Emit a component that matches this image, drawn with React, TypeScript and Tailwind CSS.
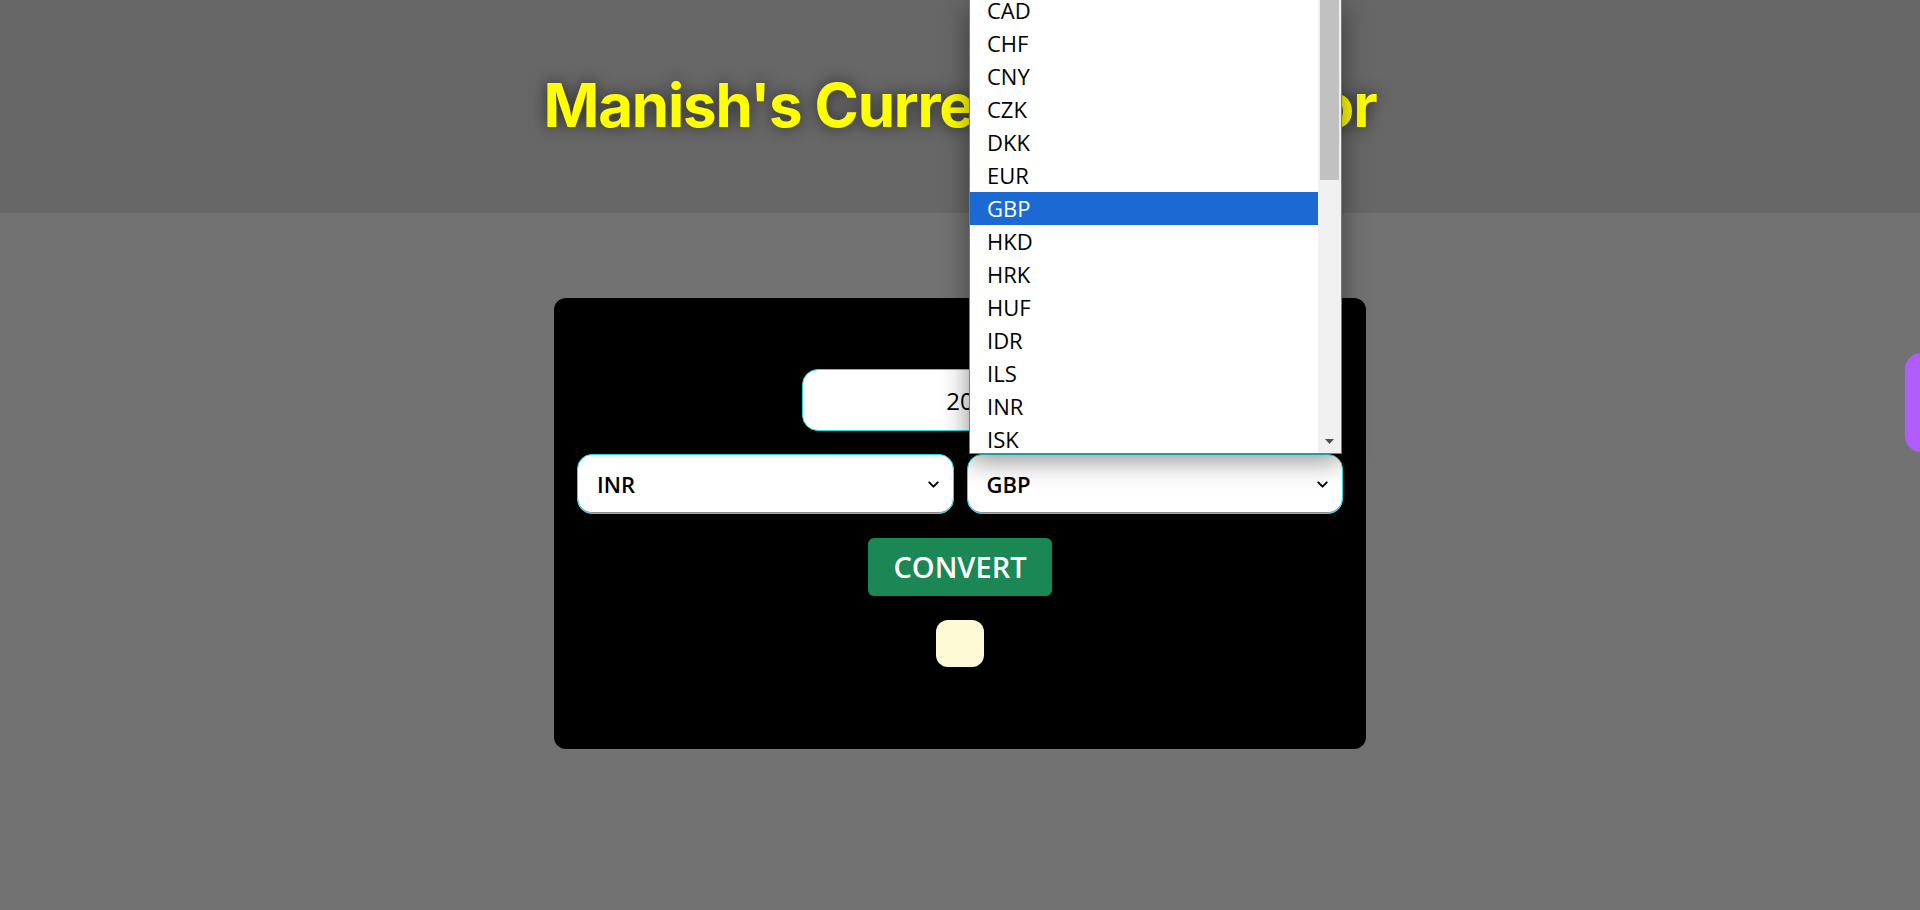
import { ChevronDown } from 'lucide-react'

const currencies = ['CAD', 'CHF', 'CNY', 'CZK', 'DKK', 'EUR', 'GBP', 'HKD', 'HRK', 'HUF', 'IDR', 'ILS', 'INR', 'ISK']

function FakeSelect({ value }: { value: string }) {
  return (
    <div className="flex h-[60px] items-center justify-between rounded-[15px] border border-[#1fe0e0] bg-white pl-[19px] pr-[11px] shadow-[inset_0_-1px_0_#8a8a8a]">
      <span className="text-[22px] font-semibold text-black">{value}</span>
      <ChevronDown className="h-[17px] w-[17px] text-black" strokeWidth={2.75} />
    </div>
  )
}

function OpenList() {
  return (
    <div className="absolute left-[969px] top-0 flex h-[454px] w-[373px] overflow-hidden border border-t-0 border-[#7a7a7a] bg-white shadow-[0_6px_26px_rgba(0,0,0,0.45)]">
      <ul className="-mt-[6px] flex-1">
        {currencies.map((c) => (
          <li
            key={c}
            className={
              c === 'GBP'
                ? 'h-[33px] bg-[#1b69d3] pl-[17px] text-[22px] leading-[33px] text-white'
                : 'h-[33px] pl-[17px] text-[22px] leading-[33px] text-black'
            }
          >
            {c}
          </li>
        ))}
      </ul>
      <div className="flex w-[23px] flex-col justify-between bg-[#f0f0f0] px-[2px] pb-[7px]">
        <div className="h-[180px] bg-[#c1c1c1]" />
        <svg width="19" height="8" viewBox="0 0 19 8" className="self-center">
          <path d="M5 1h9l-4.5 5z" fill="#505050" />
        </svg>
      </div>
    </div>
  )
}

export default function App() {
  return (
    <div className="relative min-h-screen overflow-hidden bg-[#727272] font-['Open_Sans',sans-serif]">
      <header className="flex h-[213px] items-center justify-center bg-[#676767] pb-[4px]">
        <h1 className="font-['Inter',sans-serif] text-[60px] font-bold leading-none tracking-[-1.2px] text-[#ffff00] [text-shadow:0_0_16px_rgba(0,0,0,0.6)]">
          Manish's Currency Convertor
        </h1>
      </header>

      <main className="pt-[85px]">
        <div className="mx-auto flex w-[812px] flex-col items-center rounded-[12px] bg-black px-[23px] pb-[82px] pt-[71px]">
          <input
            readOnly
            value="20"
            className="h-[62px] w-[316px] rounded-[16px] border border-[#1fe0e0] bg-white text-center text-[24px] font-medium text-black outline-none"
          />
          <div className="mt-[23px] grid w-full grid-cols-2 gap-[13px]">
            <FakeSelect value="INR" />
            <FakeSelect value="GBP" />
          </div>
          <button className="mt-[24px] h-[58px] w-[184px] rounded-[6px] bg-[#1a8754] text-[29px] font-semibold text-white">
            CONVERT
          </button>
          <div className="mt-[24px] h-[47px] w-[48px] rounded-[12px] bg-[#fffad6]" />
        </div>
      </main>

      <OpenList />

      <div className="absolute left-[1905px] top-[353px] h-[99px] w-[40px] rounded-l-[16px] bg-[#b05cff]" />
    </div>
  )
}
